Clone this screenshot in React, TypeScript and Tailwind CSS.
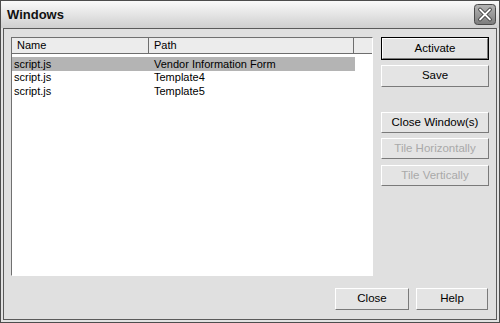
import React from 'react';

const rows = [
  { name: 'script.js', path: 'Vendor Information Form', selected: true },
  { name: 'script.js', path: 'Template4', selected: false },
  { name: 'script.js', path: 'Template5', selected: false }
];

const Btn = ({
  label,
  disabled = false,
  isDefault = false,
  className = ''
}: {
  label: string;
  disabled?: boolean;
  isDefault?: boolean;
  className?: string;
}) => {
  return (
    <div className={`${isDefault ? 'border border-black' : ''} ${className}`}>
      <div
        className={`flex h-full items-center justify-center border border-t-white border-l-white border-b-[#7a7a7a] border-r-[#7a7a7a] bg-[#e4e4e4] text-[11.5px] ${
          disabled ? 'text-[#a9a9a9]' : 'text-black'
        }`}
      >
        {label}
      </div>
    </div>
  );
};

export default function App() {
  return (
    <div
      className="flex h-[323px] w-[500px] flex-col border border-[#4d4d4d] bg-[#e2e2e2]"
      style={{ fontFamily: '"Liberation Sans", Arial, sans-serif' }}
    >
      {/* title bar */}
      <div className="flex h-[27px] items-center justify-between bg-gradient-to-b from-[#fafafa] to-[#cfcfcf] pl-[6px] pr-[3px]">
        <span className="text-[13px] font-bold text-[#111]">Windows</span>
        <svg width="22" height="21" viewBox="0 0 22 21">
          <defs>
            <linearGradient id="cb" x1="0" y1="0" x2="0" y2="1">
              <stop offset="0" stopColor="#b5b5b5" />
              <stop offset="1" stopColor="#7c7c7c" />
            </linearGradient>
          </defs>
          <rect x="0.5" y="0.5" width="21" height="20" rx="3" fill="url(#cb)" stroke="#4a4a4a" />
          <path d="M6 5.5 L16 15.5 M16 5.5 L6 15.5" stroke="#3a3a3a" strokeWidth="3.6" strokeLinecap="round" />
          <path d="M6 5.5 L16 15.5 M16 5.5 L6 15.5" stroke="#ffffff" strokeWidth="1.8" strokeLinecap="round" />
        </svg>
      </div>

      {/* body */}
      <div className="mx-[2px] mb-[2px] flex flex-1 flex-col border border-[#5a5a5a] bg-[#e0e0e0] px-[7px] pt-[8px]">
        <div className="flex gap-[8px]">
          {/* list */}
          <div className="flex h-[239px] w-[362px] flex-col border border-t-[#707070] border-l-[#707070] border-b-white border-r-white bg-white">
            <div className="flex h-[16px] border-b border-[#6e6e6e] text-[11px] text-black">
              <div className="flex w-[137px] items-center border-r border-[#6e6e6e] bg-[#ececec] pl-[5px]">Name</div>
              <div className="flex w-[205px] items-center border-r border-[#6e6e6e] bg-[#ececec] pl-[5px]">Path</div>
              <div className="flex-1 bg-[#ececec]" />
            </div>
            <div className="flex flex-col pt-[3px]">
              {rows.map((r, i) => (
                <div
                  key={i}
                  className={`flex h-[13.5px] w-[343px] items-center text-[11px] text-black ${
                    r.selected ? 'bg-[#b4b4b4]' : ''
                  }`}
                >
                  <span className="w-[137px] pl-[2px]">{r.name}</span>
                  <span className="pl-[5px]">{r.path}</span>
                </div>
              ))}
            </div>
          </div>

          {/* right buttons */}
          <div className="flex w-[108px] flex-col">
            <Btn label="Activate" isDefault className="h-[23px]" />
            <Btn label="Save" className="mt-[5px] h-[22px]" />
            <Btn label="Close Window(s)" className="mt-[25px] h-[21px]" />
            <Btn label="Tile Horizontally" disabled className="mt-[5px] h-[21px]" />
            <Btn label="Tile Vertically" disabled className="mt-[6px] h-[21px]" />
          </div>
        </div>

        {/* bottom buttons */}
        <div className="mt-[12px] flex justify-end gap-[7px] pr-[1px]">
          <Btn label="Close" className="h-[22px] w-[74px]" />
          <Btn label="Help" className="h-[22px] w-[72px]" />
        </div>
      </div>
    </div>
  );
}
